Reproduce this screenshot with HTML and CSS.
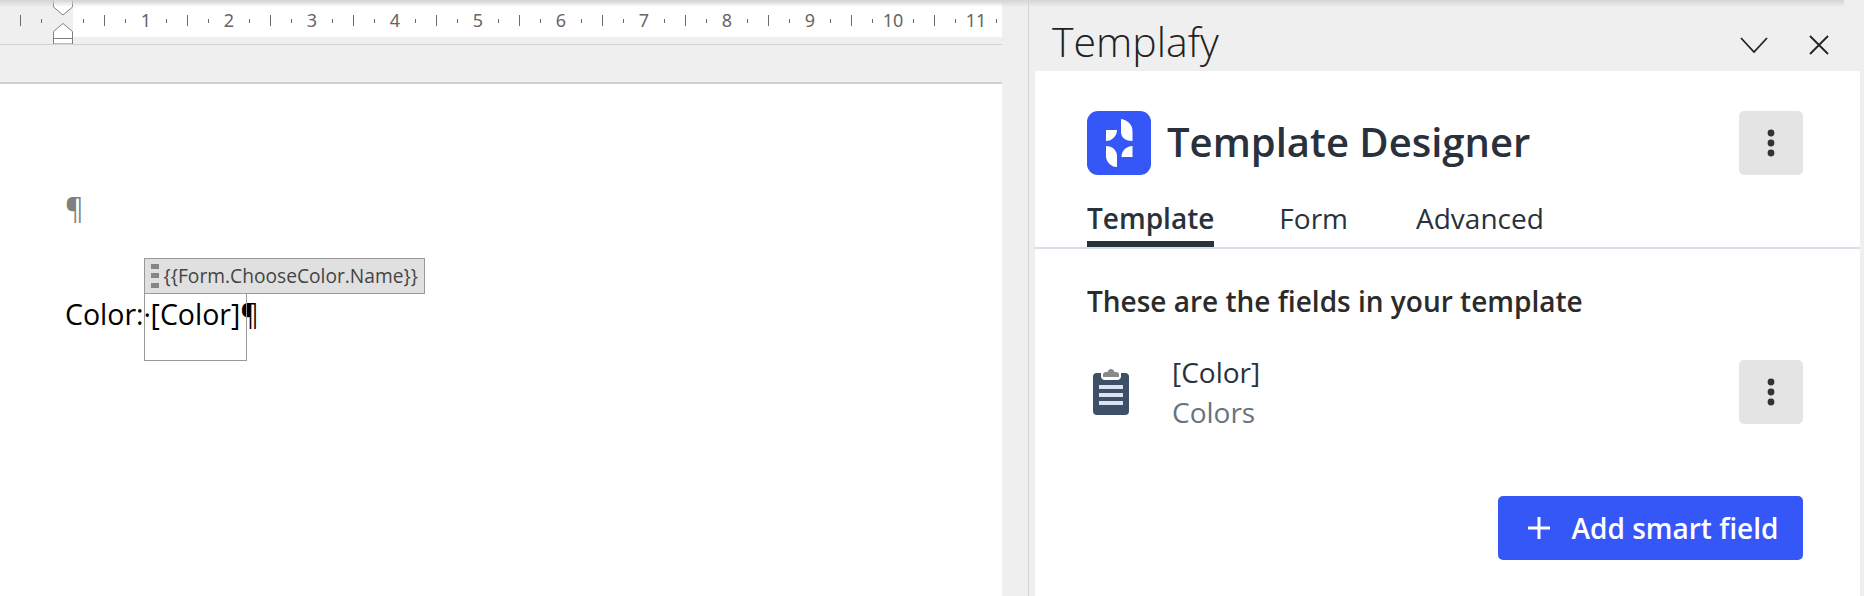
FILE: index.html
```html
<!DOCTYPE html>
<html lang="en">
<head>
<meta charset="utf-8">
<title>Templafy Template Designer</title>
<link rel="stylesheet" href="styles.css">
</head>
<body>
<div class="app">
  <div class="topshade"></div>
  <section class="doc">
    <div class="ruler">
      <svg class="ruler-svg" width="1002" height="44" viewBox="0 0 1002 44">
        <rect x="73" y="3" width="929" height="34" fill="#fff"/>
        <path class="tick" d="M20.5 15v11M104.5 15v11M187.5 15v11M270.5 15v11M353.5 15v11M436.5 15v11M519.5 15v11M602.5 15v11M685.5 15v11M768.5 15v11M851.5 15v11M934.5 15v11"/>
        <path class="tick" d="M41.5 19v4M83.5 19v4M125.5 19v4M166.5 19v4M208.5 19v4M249.5 19v4M291.5 19v4M332.5 19v4M374.5 19v4M415.5 19v4M457.5 19v4M498.5 19v4M540.5 19v4M581.5 19v4M623.5 19v4M664.5 19v4M706.5 19v4M747.5 19v4M789.5 19v4M830.5 19v4M872.5 19v4M913.5 19v4M955.5 19v4M996.5 19v4"/>
        <text class="num" x="146" y="27">1</text>
        <text class="num" x="229" y="27">2</text>
        <text class="num" x="312" y="27">3</text>
        <text class="num" x="395" y="27">4</text>
        <text class="num" x="478" y="27">5</text>
        <text class="num" x="561" y="27">6</text>
        <text class="num" x="644" y="27">7</text>
        <text class="num" x="727" y="27">8</text>
        <text class="num" x="810" y="27">9</text>
        <text class="num" x="893" y="27">10</text>
        <text class="num" x="976" y="27">11</text>
        <path class="marker" d="M53.5 0v7L63 15l9.5-8V0"/>
        <path class="marker fill" d="M63 23.5l-9.5 8v12.5h19V31.5z"/>
        <path class="marker" d="M53.5 38.5h19"/>
      </svg>
    </div>
    <div class="band"></div>
    <div class="page">
      <p class="para mark">¶</p>
      <p class="para line">
        <span>Color:</span><span class="dot">·</span><span class="field">[Color]<span class="tag"><svg class="grip" width="8" height="24" viewBox="0 0 8 24"><path d="M0 0h8v5H0zM0 9h8v5H0zM0 19h8v5H0z"/></svg>{{Form.ChooseColor.Name}}</span><span class="fieldbox"></span></span><span>¶</span>
      </p>
    </div>
  </section>
  <div class="gutter"></div>
  <aside class="pane">
    <header class="pane-head">
      <h1 class="pane-title">Templafy</h1>
      <div class="pane-ctrls">
        <svg class="ctrl" width="28" height="16" viewBox="0 0 28 16"><path d="M1 1l13 14L27 1"/></svg>
        <svg class="ctrl" width="20" height="20" viewBox="0 0 20 20"><path d="M1 1l18 18M19 1L1 19"/></svg>
      </div>
    </header>
    <div class="pane-body">
      <div class="brand">
        <svg class="logo" width="64" height="64" viewBox="0 0 64 64">
          <rect width="64" height="64" rx="11" fill="#3657f7"/>
          <path fill="#fff" d="M34 8C40 9 45.500 13 45.500 20V30C39 30 34 27 34 21ZM19 19H30C30 25 25 30 19 30ZM19 35C25 35 30 39 30 45V56C24 56 19 51 19 45ZM45.500 35V46H34.500C34.500 40 39 35 45.500 35Z"/>
        </svg>
        <h2 class="brand-name">Template Designer</h2>
        <button class="kebab" type="button" aria-label="More"><svg width="8" height="28" viewBox="0 0 8 28"><circle cx="4" cy="4" r="3.400"/><circle cx="4" cy="14" r="3.400"/><circle cx="4" cy="24" r="3.400"/></svg></button>
      </div>
      <nav class="tabs">
        <a class="tab active">Template</a>
        <a class="tab">Form</a>
        <a class="tab tab-last">Advanced</a>
      </nav>
      <div class="content">
        <h3 class="heading">These are the fields in your template</h3>
        <div class="item">
          <svg class="clip" width="36" height="46" viewBox="0 0 36 46">
            <rect y="4" width="36" height="42" rx="4" fill="#3d5068"/>
            <path d="M8 2h20v6a4 4 0 0 1-4 3H12a4 4 0 0 1-4-3z" fill="#fff"/>
            <path d="M10 8V6a3 3 0 0 1 3-3h1.500c1-4 6-4 7 0H23a3 3 0 0 1 3 3v2z" fill="#8a8a8a"/>
            <path d="M6 16h24v4H6zM6 24h24v4H6zM6 32h24v4H6z" fill="#dce3f0"/>
          </svg>
          <div class="item-text">
            <div class="item-name">[Color]</div>
            <div class="item-sub">Colors</div>
          </div>
          <button class="kebab" type="button" aria-label="More"><svg width="8" height="28" viewBox="0 0 8 28"><circle cx="4" cy="4" r="3.400"/><circle cx="4" cy="14" r="3.400"/><circle cx="4" cy="24" r="3.400"/></svg></button>
        </div>
        <div class="actions">
          <button class="add" type="button"><svg width="22" height="22" viewBox="0 0 22 22"><path d="M11 0v22M0 11h22"/></svg>Add smart field</button>
        </div>
      </div>
    </div>
  </aside>
</div>
</body>
</html>
```
FILE: styles.css
```css
* { box-sizing: border-box; }
html, body { margin: 0; padding: 0; }
body {
  width: 1864px;
  height: 596px;
  overflow: hidden;
  background: #efefef;
  font-family: "Open Sans", "Noto Sans", sans-serif;
}
.app { position: relative; display: flex; width: 1864px; height: 596px; }
.topshade {
  position: absolute;
  left: 0; top: 0;
  width: 1844px; height: 7px;
  background: linear-gradient(#d4d4d4, rgba(239,239,239,0));
  z-index: 2;
  pointer-events: none;
}

/* document */
.doc { width: 1002px; display: flex; flex-direction: column; flex: none; }
.ruler { height: 45px; border-bottom: 1px solid #d2d2d2; }
.ruler-svg { display: block; }
.tick { stroke: #6b6b6b; stroke-width: 1; fill: none; }
.num { font: 400 18px "Noto Sans", "Open Sans", sans-serif; fill: #666; text-anchor: middle; }
.marker { stroke: #808080; stroke-width: 1; fill: #fff; }
.band { height: 39px; border-bottom: 2px solid #d0d0d0; }
.page { flex: 1; background: #fff; padding: 104px 0 0 65px; font-size: 28.5px; line-height: 36px; color: #000; }
.para { margin: 0; }
.mark { color: #808080; height: 108px; line-height: 40px; }
.line { display: flex; }
.dot { width: 7px; }
.field { position: relative; }
.tag {
  position: absolute;
  left: -7px; bottom: 38px;
  width: 281px; height: 36px;
  display: flex; align-items: center;
  background: #e0e0e0;
  border: 1px solid #999;
  padding-left: 6px;
  font-size: 19.2px;
  color: #444;
  white-space: nowrap;
}
.grip { fill: #868686; flex: none; margin-right: 5px; }
.fieldbox {
  position: absolute;
  left: -7px; top: -3px;
  width: 103px; height: 68px;
  border: 1px solid #999;
  border-top: 0;
}

.gutter { width: 27px; flex: none; border-right: 1px solid #d2d2d2; }

/* task pane */
.pane { width: 835px; padding: 0 4px 0 6px; display: flex; flex-direction: column; flex: none; }
.pane-head { height: 71px; display: flex; align-items: center; justify-content: space-between; padding: 10px 31px 0 17px; }
.pane-title { margin: 0; font-weight: 300; font-size: 41px; line-height: 50px; color: #222; font-family: "Open Sans", sans-serif; }
.pane-ctrls { display: flex; align-items: center; gap: 41px; padding-top: 9px; }
.ctrl { display: block; fill: none; stroke: #222; stroke-width: 1.800; }
.pane-body { flex: 1; background: #fff; display: flex; flex-direction: column; }
.brand { display: flex; align-items: center; padding: 40px 57px 0 52px; }
.logo { display: block; flex: none; }
.brand-name { flex: 1; margin: 0 0 2px 16px; font-size: 40px; font-weight: 600; line-height: 62px; color: #29323c; }
.kebab {
  width: 64px; height: 64px;
  flex: none;
  display: flex; align-items: center; justify-content: center;
  border: 0; padding: 0;
  border-radius: 5px;
  background: #e4e4e4;
}
.kebab svg { display: block; fill: #333; }
.tabs { display: flex; gap: 65px; height: 74px; padding: 0 52px; border-bottom: 2px solid #d8dfe8; align-items: flex-end; }
.tab { font-size: 28px; line-height: 50px; height: 66px; padding-top: 12px; color: #29323c; }
.tab-last { margin-left: 3px; }
.tab.active { font-weight: 600; border-bottom: 6px solid #29323c; margin-bottom: 0; }
.content { flex: 1; padding: 32px 57px 0 52px; }
.heading { margin: 0; font-size: 28px; font-weight: 600; line-height: 40px; color: #2b2b2b; }
.item { display: flex; align-items: center; margin-top: 39px; height: 64px; }
.clip { flex: none; margin-left: 6px; display: block; }
.item-text { flex: 1; margin-left: 43px; }
.item-name { font-size: 28px; line-height: 40px; color: #29323c; }
.item-sub { font-size: 28px; line-height: 40px; color: #68737f; }
.actions { display: flex; justify-content: flex-end; margin-top: 72px; }
.add {
  width: 305px; height: 64px;
  display: flex; align-items: center; justify-content: center;
  gap: 22px;
  border: 0; border-radius: 5px;
  padding: 0 0 0 5px;
  background: #3657f7;
  color: #fff;
  font: 600 28px "Open Sans", sans-serif;
}
.add svg { display: block; fill: none; stroke: #fff; stroke-width: 3; }
```
